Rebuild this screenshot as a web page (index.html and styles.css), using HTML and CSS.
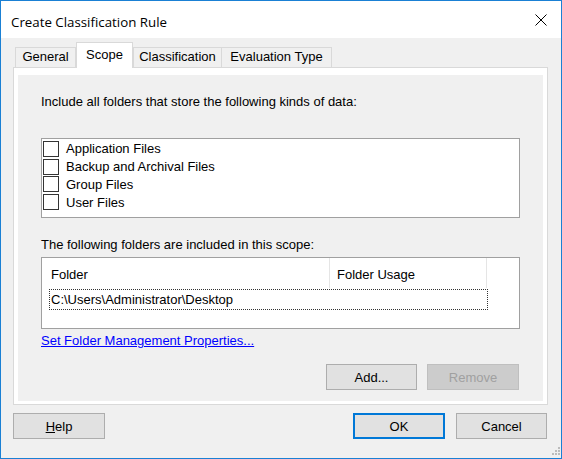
FILE: index.html
```html
<!DOCTYPE html>
<html>
<head>
<meta charset="utf-8">
<title>Create Classification Rule</title>
<link rel="stylesheet" href="styles.css">
</head>
<body>
<div class="window">
  <div class="titlebar">
    <span class="title">Create Classification Rule</span>
    <svg class="close" width="12" height="12" viewBox="0 0 12 12"><path d="M0.5 0.5 L11.5 11.5 M11.5 0.5 L0.5 11.5" stroke="#000" stroke-width="1" fill="none"/></svg>
  </div>
  <div class="client">
    <div class="tabs">
      <div class="tab t-general">General</div>
      <div class="tab active t-scope">Scope</div>
      <div class="tab t-class">Classification</div>
      <div class="tab t-eval">Evaluation Type</div>
    </div>
    <div class="panel">
      <div class="page">
        <div class="label first">Include all folders that store the following kinds of data:</div>
        <div class="checklist">
          <div class="item"><span class="cb"></span>Application Files</div>
          <div class="item"><span class="cb"></span>Backup and Archival Files</div>
          <div class="item"><span class="cb"></span>Group Files</div>
          <div class="item"><span class="cb"></span>User Files</div>
        </div>
        <div class="label second">The following folders are included in this scope:</div>
        <div class="listview">
          <div class="lv-header">
            <div class="col c1">Folder</div>
            <div class="col c2">Folder Usage</div>
          </div>
          <div class="lv-row"><span class="focus">C:\Users\Administrator\Desktop</span></div>
        </div>
        <a class="link">Set Folder Management Properties...</a>
        <div class="page-buttons">
          <button class="btn add">Add...</button>
          <button class="btn remove" disabled>Remove</button>
        </div>
      </div>
    </div>
    <div class="dialog-buttons">
      <button class="btn help"><u>H</u>elp</button>
      <span class="spacer"></span>
      <button class="btn ok">OK</button>
      <button class="btn cancel">Cancel</button>
    </div>
  </div>
  <svg class="grip" width="10" height="12" viewBox="0 0 10 12">
    <rect x="7" y="1" width="2" height="2" fill="#bcbcbc"/>
    <rect x="4" y="4" width="2" height="2" fill="#bcbcbc"/>
    <rect x="7" y="4" width="2" height="2" fill="#bcbcbc"/>
    <rect x="1" y="7" width="2" height="2" fill="#bcbcbc"/>
    <rect x="4" y="7" width="2" height="2" fill="#bcbcbc"/>
    <rect x="7" y="7" width="2" height="2" fill="#bcbcbc"/>
  </svg>
</div>
</body>
</html>
```
FILE: styles.css
```css
* { box-sizing: border-box; }
html, body { margin: 0; padding: 0; }
body {
  font-family: "Liberation Sans", Arial, sans-serif;
  font-size: 13px;
  color: #000;
  background: #f0f0f0;
}
.window {
  position: relative;
  width: 562px;
  height: 459px;
  border: 1px solid #1a80d4;
  display: flex;
  flex-direction: column;
  background: #f0f0f0;
}
.titlebar {
  height: 37px;
  flex: none;
  background: #fff;
  display: flex;
  align-items: center;
  justify-content: space-between;
  padding: 0 14px 0 10px;
}
.title {
  font-family: "Open Sans", "Noto Sans", sans-serif;
  font-size: 13.3px;
  margin-top: 4px;
}
.close { display: block; }
.client {
  flex: 1;
  padding: 4px 13px 0 12px;
  display: flex;
  flex-direction: column;
}
.tabs {
  height: 25px;
  display: flex;
  align-items: flex-end;
  margin-left: 2px;
}
.tab {
  height: 20px;
  border: 1px solid #d9d9d9;
  border-bottom: none;
  background: #f0f0f0;
  text-align: center;
  line-height: 17px;
  white-space: nowrap;
}
.tab.active {
  height: 26px;
  margin-bottom: -1px;
  background: #fff;
  padding-top: 3px;
  z-index: 1;
}
.t-general { width: 61px; }
.t-scope { width: 57px; }
.t-class { width: 89px; }
.t-eval { width: 110px; border-left: none; }
.panel {
  height: 338px;
  border: 1px solid #d9d9d9;
  background: #fff;
  padding: 7px 4px 3px 4px;
}
.page {
  height: 100%;
  background: #f0f0f0;
  padding: 0 23px;
  display: flex;
  flex-direction: column;
}
.label { line-height: 15px; white-space: nowrap; }
.label.first { margin-top: 19px; }
.label.second { margin-top: 19px; }
.checklist {
  margin-top: 29px;
  height: 80px;
  border: 1px solid #a0a0a0;
  background: #fff;
  padding-top: 1px;
}
.item {
  height: 17.75px;
  display: flex;
  align-items: center;
  white-space: nowrap;
}
.cb {
  width: 16px;
  height: 16px;
  border: 1px solid #333;
  background: #fff;
  margin-left: 1px;
  margin-right: 7px;
  flex: none;
}
.listview {
  margin-top: 5px;
  height: 72px;
  border: 1px solid #a0a0a0;
  background: #fff;
}
.lv-header {
  display: flex;
  height: 30px;
}
.col {
  height: 30px;
  padding-top: 9px;
  line-height: 15px;
  border-right: 1px solid #e5e5e5;
  white-space: nowrap;
}
.c1 { width: 288px; padding-left: 9px; }
.c2 { width: 157px; padding-left: 7px; }
.lv-row {
  padding: 1px 0 0 7px;
}
.focus {
  display: block;
  width: 439px;
  height: 21px;
  border: 1px dotted #333;
  padding-left: 1px;
  line-height: 19px;
  white-space: nowrap;
}
.link {
  align-self: flex-start;
  margin-top: 4px;
  line-height: 15px;
  color: #0000ff;
  text-decoration: underline;
  cursor: pointer;
}
.page-buttons {
  margin-top: 16px;
  display: flex;
  justify-content: flex-end;
  gap: 10px;
  padding-right: 1px;
}
.btn {
  font-family: "Liberation Sans", Arial, sans-serif;
  font-size: 13px;
  color: #000;
  height: 26px;
  background: #e1e1e1;
  border: 1px solid #adadad;
  padding: 0;
  margin: 0;
  border-radius: 0;
}
.add { width: 91px; }
.remove {
  width: 92px;
  background: #cccccc;
  border-color: #bfbfbf;
  color: #a0a0a0;
}
.dialog-buttons {
  margin-top: 8px;
  display: flex;
  margin-right: 1px;
}
.spacer { flex: 1; }
.help { width: 92px; }
.help u { text-decoration: underline; }
.ok {
  width: 92px;
  border: 2px solid #0078d7;
  margin-right: 11px;
}
.cancel { width: 91px; }
.grip {
  position: absolute;
  right: 0;
  bottom: 0;
}
```
